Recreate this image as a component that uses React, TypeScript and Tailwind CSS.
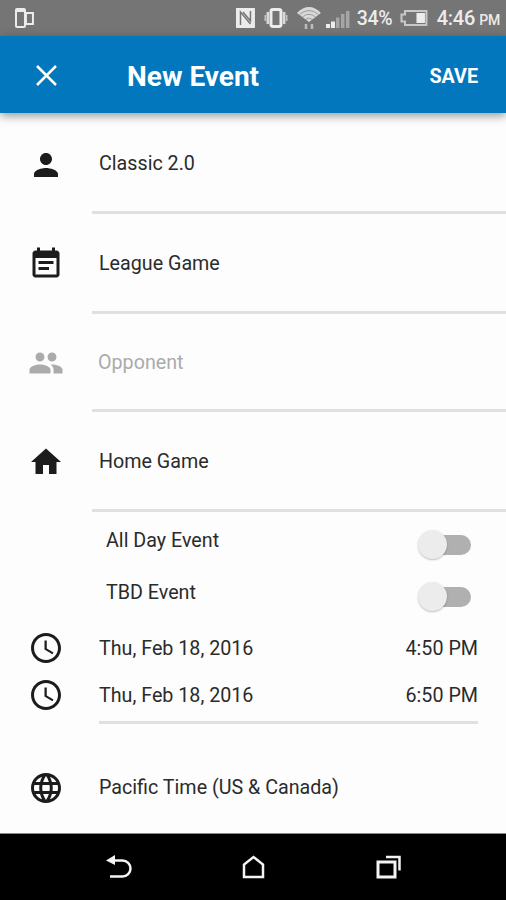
import type { ReactNode } from 'react';

const paths = {
  person: 'M12 12c2.21 0 4-1.79 4-4s-1.79-4-4-4-4 1.79-4 4 1.79 4 4 4zm0 2c-2.67 0-8 1.34-8 4v2h16v-2c0-2.66-5.33-4-8-4z',
  note: 'M17 10H7v2h10v-2zm2-7h-1V1h-2v2H8V1H6v2H5c-1.11 0-1.99.9-1.99 2L3 19c0 1.1.89 2 2 2h14c1.1 0 2-.9 2-2V5c0-1.1-.9-2-2-2zm0 16H5V8h14v11zm-5-5H7v2h7v-2z',
  people: 'M16 11c1.66 0 2.99-1.34 2.99-3S17.66 5 16 5c-1.66 0-3 1.34-3 3s1.34 3 3 3zm-8 0c1.66 0 2.99-1.34 2.99-3S9.66 5 8 5C6.34 5 5 6.34 5 8s1.34 3 3 3zm0 2c-2.33 0-7 1.17-7 3.5V19h14v-2.5c0-2.33-4.67-3.5-7-3.5zm8 0c-.29 0-.62.02-.97.05 1.16.84 1.97 1.97 1.97 3.45V19h6v-2.5c0-2.33-4.67-3.5-7-3.5z',
  home: 'M10 20v-6h4v6h5v-8h3L12 3 2 12h3v8z',
  clock: 'M11.99 2C6.47 2 2 6.48 2 12s4.47 10 9.99 10C17.52 22 22 17.52 22 12S17.52 2 11.99 2zM12 20c-4.42 0-8-3.58-8-8s3.58-8 8-8 8 3.58 8 8-3.58 8-8 8zm.5-13H11v6l5.25 3.15.75-1.23-4.5-2.67z',
  globe: 'M11.99 2C6.47 2 2 6.48 2 12s4.47 10 9.99 10C17.52 22 22 17.52 22 12S17.52 2 11.99 2zm6.93 6h-2.95c-.32-1.25-.78-2.45-1.38-3.56 1.84.63 3.37 1.91 4.33 3.56zM12 4.04c.83 1.2 1.48 2.53 1.91 3.96h-3.82c.43-1.43 1.08-2.76 1.91-3.96zM4.26 14C4.1 13.36 4 12.69 4 12s.1-1.36.26-2h3.38c-.08.66-.14 1.32-.14 2 0 .68.06 1.34.14 2H4.26zm.82 2h2.95c.32 1.25.78 2.45 1.38 3.56-1.84-.63-3.37-1.9-4.33-3.56zm2.95-8H5.08c.96-1.66 2.49-2.93 4.33-3.56C8.81 5.55 8.35 6.75 8.03 8zM12 19.96c-.83-1.2-1.48-2.53-1.91-3.96h3.82c-.43 1.43-1.08 2.76-1.91 3.96zM14.34 14H9.66c-.09-.66-.16-1.32-.16-2 0-.68.07-1.35.16-2h4.68c.09.65.16 1.32.16 2 0 .68-.07 1.34-.16 2zm.25 5.56c.6-1.11 1.06-2.31 1.38-3.56h2.95c-.96 1.65-2.49 2.93-4.33 3.56zM16.36 14c.08-.66.14-1.32.14-2 0-.68-.06-1.34-.14-2h3.38c.16.64.26 1.31.26 2s-.1 1.36-.26 2h-3.38z',
};

function Icon({ name, className = 'text-[#1c1c1c]' }: { name: keyof typeof paths; className?: string }) {
  return (
    <svg viewBox="0 0 24 24" fill="currentColor" className={`ml-7 size-9 shrink-0 ${className}`}>
      <path d={paths[name]} />
    </svg>
  );
}

function Field({ icon, height, muted, children }: { icon: keyof typeof paths; height: string; muted?: boolean; children: ReactNode }) {
  return (
    <div className={`flex ${height}`}>
      <div className="flex w-[92px] shrink-0 items-center pb-px">
        <Icon name={icon} className={muted ? 'text-[#ababab]' : 'text-[#1c1c1c]'} />
      </div>
      <div className={`flex flex-1 items-center border-b-3 border-[#e0e0e0] pt-0.5 ${muted ? 'pl-1.5 text-[#ababab]' : 'pl-[7px]'}`}>
        {children}
      </div>
    </div>
  );
}

function Toggle({ label }: { label: string }) {
  return (
    <div className="flex h-[52px] items-center justify-between pl-[106px] pr-[35px]">
      <span className="mt-0.5">{label}</span>
      <span className="mt-[9px] flex h-5 w-[50px] items-center rounded-full bg-[#b0b0b0]">
        <span className="-ml-[3px] size-[29px] shrink-0 rounded-full bg-[#ececec] shadow-[0_1px_2px_rgba(0,0,0,0.25)]" />
      </span>
    </div>
  );
}

function TimeRow({ date, time }: { date: string; time: string }) {
  return (
    <div className="flex items-center">
      <Icon name="clock" />
      <div className="ml-[35px] mr-7 flex flex-1 justify-between pt-0.5">
        <span>{date}</span>
        <span>{time}</span>
      </div>
    </div>
  );
}

function StatusBar() {
  return (
    <div className="flex h-9 items-center bg-[#757575] pl-3.5 pr-[6px] text-[#ececec]">
      <svg width="21" height="22" viewBox="0 0 21 22" fill="none" stroke="currentColor" strokeWidth="2">
        <rect x="2" y="2" width="9" height="18" rx="1" />
        <path d="M3 4h7" />
        <path d="M12 6h7v11h-7z" />
      </svg>
      <svg className="ml-[200px]" width="21" height="20" viewBox="0 0 21 20">
        <path fill="currentColor" d="M1 0h19v20H1z" />
        <path fill="none" stroke="#757575" strokeWidth="1.5" d="M5.5 17V4l10 12M15.500 3v10L8 4" />
      </svg>
      <svg className="ml-2" width="24" height="22" viewBox="0 0 24 22" fill="none" stroke="currentColor">
        <rect x="7" y="2.5" width="10" height="17" rx="2" strokeWidth="3" />
        <path strokeWidth="2.6" stroke="#d8d8d8" d="M3.8 5v12M20.2 5v12" />
        <path strokeWidth="1.4" stroke="#c8c8c8" d="M1.2 8v6M22.8 8v6" />
      </svg>
      <svg className="ml-2" width="26" height="24" viewBox="0 0 26 24">
        <path fill="#d8d8d8" d="M1 7Q13-5 25 7L13 16z" />
        <path fill="none" stroke="#8c8c8c" strokeWidth=".8" d="M3.500 8.500Q13 .5 22.500 8.500M6.500 11Q13 5.500 19.500 11M9.500 13.500Q13 10.500 16.500 13.500" />
        <path fill="none" stroke="#bdbdbd" strokeWidth="2.5" d="M10 18v5M16 18v5" />
      </svg>
      <svg className="ml-1 mt-px" width="24" height="18" viewBox="0 0 24 18">
        <path fill="currentColor" d="M0 14h4v4H0zM5 11.5h4V18H5z" />
        <path fill="#a5a5a5" d="M10 7.5h3.5V18H10zM15 4h3.5v14H15zM20 1h3.5v17H20z" />
      </svg>
      <span className="ml-[7px] mt-0.5 w-[37px] whitespace-nowrap text-[19.5px] font-medium tracking-[-0.3px]">34%</span>
      <svg className="ml-[6px]" width="28" height="18" viewBox="0 0 28 18">
        <path fill="none" stroke="#c8c8c8" strokeWidth="2" d="M5 2h21.5v14H5v-3.5H1.5v-7H5z" />
        <path fill="currentColor" d="M16.5 4H25v10h-8.5z" />
      </svg>
      <div className="ml-[9px] mt-0.5 flex flex-1 items-baseline gap-1 whitespace-nowrap text-[20px] font-medium tracking-[-0.2px]">
        <span>4:46</span>
        <span className="text-[14px]">PM</span>
      </div>
    </div>
  );
}

export default function App() {
  return (
    <main className="flex h-[900px] w-[506px] flex-col overflow-hidden bg-[#fdfdfd] font-[Roboto,sans-serif] text-[19.7px] leading-6 text-[#2b2b2b]">
      <StatusBar />

      <header className="relative flex h-[77px] shrink-0 items-center bg-[#0277bd] pl-9 pr-7 text-white shadow-[0_3px_9px_rgba(0,0,0,0.4)]">
        <svg width="21" height="21" viewBox="0 0 21 21" className="mt-px" fill="none" stroke="currentColor" strokeWidth="2.5">
          <path d="M1 1l19 19M20 1L1 20" />
        </svg>
        <h1 className="ml-[70px] mt-1 flex-1 text-[28px] font-bold">New Event</h1>
        <button className="mt-1 text-[19.7px] font-bold">SAVE</button>
      </header>

      <Field icon="person" height="h-[101px] *:pt-[3px]">Classic 2.0</Field>
      <Field icon="note" height="h-[100px]">League Game</Field>
      <Field icon="people" height="h-[98px]" muted>Opponent</Field>
      <Field icon="home" height="h-[100px]">Home Game</Field>

      <div className="flex flex-col pt-[2px]">
        <Toggle label="All Day Event" />
        <Toggle label="TBD Event" />
      </div>

      <div className="flex flex-col gap-[11px] pt-3">
        <TimeRow date="Thu, Feb 18, 2016" time="4:50 PM" />
        <TimeRow date="Thu, Feb 18, 2016" time="6:50 PM" />
      </div>
      <div className="ml-[99px] mr-7 mt-2 h-[3px] shrink-0 bg-[#e0e0e0]" />

      <div className="flex flex-1 items-center pt-[18px]">
        <Icon name="globe" />
        <span className="ml-[35px] mt-px">Pacific Time (US &amp; Canada)</span>
      </div>

      <nav className="flex h-[67px] shrink-0 items-center border-t border-[#888] bg-black pl-[106px] text-[#f4f4f4]">
        <svg width="26" height="24" viewBox="0 0 26 24" fill="none" stroke="currentColor" strokeWidth="2.5">
          <path d="M6 5.5h10.5a8 8 0 0 1 0 16H4" />
          <path fill="currentColor" stroke="none" d="M0 5.5L9 0v10z" />
        </svg>
        <svg className="ml-[110px]" width="23" height="24" viewBox="0 0 23 24" fill="none" stroke="currentColor" strokeWidth="2.5">
          <path d="M2 22V9.5L11.5 2 21 9.5V22z" />
        </svg>
        <svg className="ml-[111px]" width="26" height="24" viewBox="0 0 26 24" fill="none" stroke="currentColor">
          <path strokeWidth="3" d="M2 7h17v15H2z" />
          <path strokeWidth="2.5" d="M10 2h13.5v13.5" />
        </svg>
      </nav>
    </main>
  );
}
